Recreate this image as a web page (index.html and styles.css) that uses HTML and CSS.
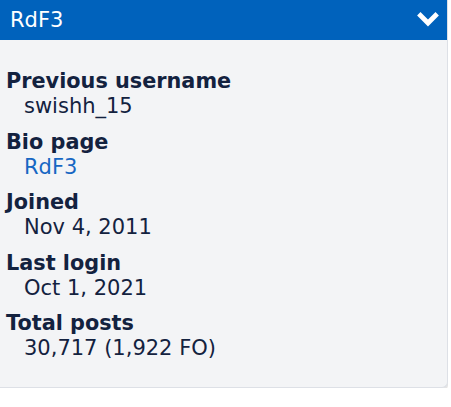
FILE: index.html
```html
<!DOCTYPE html>
<html lang="en">
<head>
    <meta charset="UTF-8">
    <meta name="viewport" content="width=device-width, initial-scale=1.0">
    <title>RdF3</title>
    <link rel="stylesheet" href="styles.css">
</head>
<body>
    <div class="user-box">
        <div class="user-head">
            <span class="user-name">RdF3</span>
            <svg class="toggle" width="22" height="15" viewBox="0 0 22 15">
                <polyline points="3.5,3.5 11,11 18.5,3.5" fill="none" stroke="#fff" stroke-width="4.8" stroke-linecap="square"/>
            </svg>
        </div>
        <dl class="user-info">
            <dt>Previous username</dt>
            <dd>swishh_15</dd>
            <dt>Bio page</dt>
            <dd><a href="#">RdF3</a></dd>
            <dt>Joined</dt>
            <dd>Nov 4, 2011</dd>
            <dt>Last login</dt>
            <dd>Oct 1, 2021</dd>
            <dt>Total posts</dt>
            <dd>30,717 (1,922 FO)</dd>
        </dl>
    </div>
</body>
</html>
```

FILE: styles.css
```css
:root {
    --blue: #0062bc;
    --panel: #f3f4f6;
    --text: #13223f;
    --link: #1767c3;
}

* {
    box-sizing: border-box;
    margin: 0;
    padding: 0;
}

body {
    background: #fff;
    font-family: 'DejaVu Sans', Verdana, sans-serif;
    color: var(--text);
}

.user-box {
    width: 448px;
    border-right: 1px solid #dde0e6;
    border-bottom: 1px solid #dde0e6;
    border-radius: 0 0 6px 0;
    background: var(--panel);
    box-shadow: 0 3px 0 #e4e4e4;
}

.user-head {
    height: 40px;
    background: var(--blue);
    display: flex;
    align-items: center;
    justify-content: space-between;
    padding: 0 8px 0 10px;
    color: #fff;
}

.user-name {
    font-size: 21px;
}

.toggle {
    display: block;
    margin-top: -2px;
}

.user-info {
    padding: 29px 6px 15px;
    font-size: 21px;
    line-height: 25px;
}

.user-info dt {
    font-weight: bold;
    font-size: 20.8px;
}

.user-info dd {
    padding-left: 18px;
    margin-bottom: 10.6px;
}

.user-info a {
    color: var(--link);
    text-decoration: none;
}
```
